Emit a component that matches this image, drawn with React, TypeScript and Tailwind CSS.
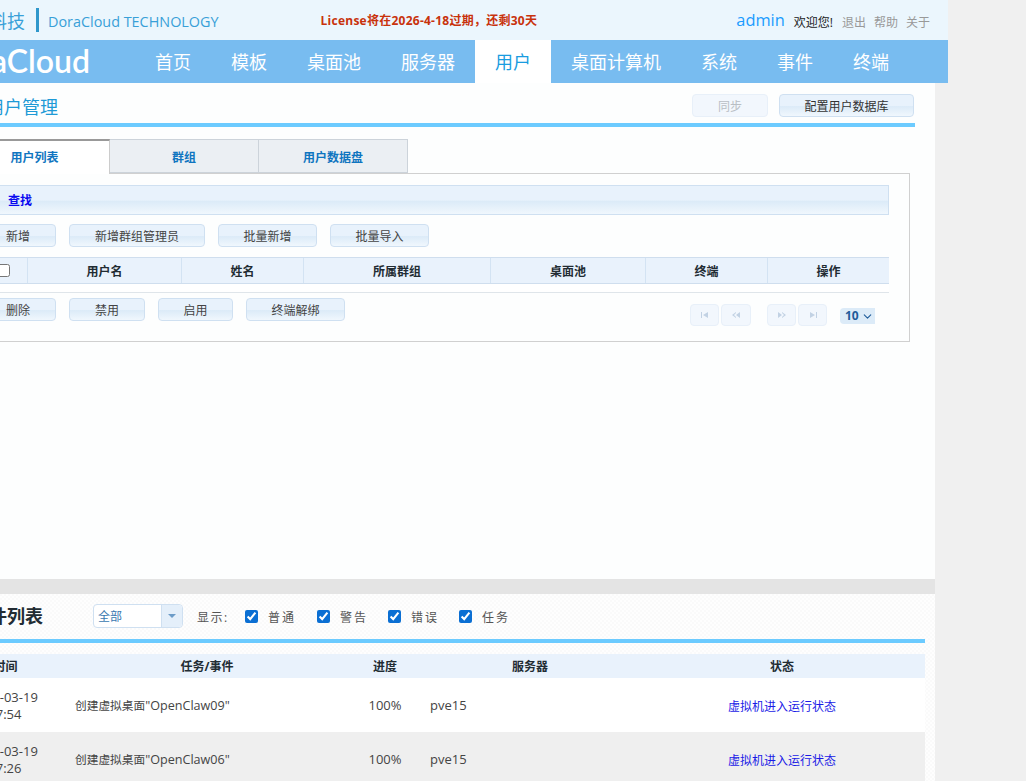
import { ChevronDown } from "lucide-react";

const font = "font-['Open_Sans','Noto_Sans_CJK_SC',sans-serif]";
const glossy =
  "bg-[linear-gradient(#e8f2fc_0%,#e8f2fc_50%,#dcebf8_55%,#f0f7fd_100%)] border border-[#cfe0f1]";

const navItems = ["首页", "模板", "桌面池", "服务器", "用户", "桌面计算机", "系统", "事件", "终端"];
const topButtons = [
  { label: "新增", w: "w-[76px]" },
  { label: "新增群组管理员", w: "w-[136px]" },
  { label: "批量新增", w: "w-[99px]" },
  { label: "批量导入", w: "w-[99px]" },
];
const bottomButtons = [
  { label: "删除", w: "w-[76px]" },
  { label: "禁用", w: "w-[76px]" },
  { label: "启用", w: "w-[75px]" },
  { label: "终端解绑", w: "w-[99px]" },
];
const columns = ["用户名", "姓名", "所属群组", "桌面池", "终端", "操作"];
const filters = [
  { label: "普通", w: "w-[72px]" },
  { label: "警告", w: "w-[71px]" },
  { label: "错误", w: "w-[71px]" },
  { label: "任务", w: "w-[60px]" },
];
const events = [
  { date: "2026-03-19", time: "17:47:54", task: "OpenClaw09", bg: "bg-white" },
  { date: "2026-03-19", time: "17:47:26", task: "OpenClaw06", bg: "bg-[#efefef]" },
];
const eventGrid = "grid grid-cols-[115px_284px_78px_206px_292px]";

function PagerIcon({ d }: { d: string }) {
  return (
    <svg width="10" height="8" viewBox="0 0 10 8" className="fill-[#c2d2e4]">
      <path d={d} />
    </svg>
  );
}

const pager = [
  { d: "M1 1h1v6H1zM8 1v6L3 4z", w: "w-[29px]" },
  { d: "M9 1v6L5 4zM5 1v1L3 4l2 2v1L1 4z", w: "w-[30px]" },
  { d: "M1 1v6l4-3zM5 1v1l2 2-2 2v1l4-3z", w: "w-[29px]" },
  { d: "M2 1v6l5-3zM8 1h1v6H8z", w: "w-[29px]" },
];

export default function App() {
  return (
    <div className={`w-[1026px] h-[781px] overflow-hidden bg-[#f0f0f0] ${font}`}>
      <div className="w-[1076px] -ml-[50px]">
        {/* Header */}
        <div className="w-[998px] h-10 bg-[#ebf6fd] flex items-center pl-[39px] pr-[18px]">
          <span className="text-[18px] text-[#38a0d8] mt-[2px]">科技</span>
          <span className="w-[3px] h-6 bg-[#2f97cb] ml-[11px]" />
          <span className="ml-[9px] mt-[3px] text-[14.4px] text-[#38a0d8]">DoraCloud TECHNOLOGY</span>
          <span className="ml-[102px] mt-[2px] text-xs tracking-[0.25px] font-bold text-[#c8320c]">
            License将在2026-4-18过期，还剩30天
          </span>
          <span className="ml-auto mt-px text-[16.4px] text-[#1a9cff]">admin</span>
          <span className="ml-[9px] mt-[5px] text-xs text-[#222]">欢迎您!</span>
          <span className="ml-[9px] mt-[5px] text-xs text-[#999]">退出</span>
          <span className="ml-2 mt-[5px] text-xs text-[#999]">帮助</span>
          <span className="ml-2 mt-[5px] text-xs text-[#999]">关于</span>
        </div>

        {/* Nav */}
        <div className="w-[998px] h-[43px] bg-[#78bcf0] flex">
          <div className="w-[185px] pr-[45px] flex items-center justify-end">
            <span className="text-[32px] font-['Lato',sans-serif] font-semibold text-white leading-none -mt-[2px]">
              DoraCloud
            </span>
          </div>
          {navItems.map((item) => (
            <div
              key={item}
              className={
                item === "用户"
                  ? "px-5 pt-[2px] flex items-center text-[18px] bg-white text-[#1a9ce0]"
                  : "px-5 pt-[2px] flex items-center text-[18px] text-white"
              }
            >
              {item}
            </div>
          ))}
        </div>

        {/* Main */}
        <div className="w-[985px] h-[496px] bg-[#fdfefe]">
          <div className="w-[965px] h-10 flex pl-9 pr-px">
            <span className="text-[18px] text-[#1e9ad6] mt-[11px] leading-[26px]">用户管理</span>
            <button className="ml-auto mt-[11px] pt-[2px] w-[76px] h-[23px] rounded border border-[#e8f0f9] bg-[#f2f7fd] text-xs text-[#b9bec4]">
              同步
            </button>
            <button className={`ml-[11px] mt-[11px] pt-[2px] w-[135px] h-[23px] rounded text-xs text-[#333] ${glossy}`}>
              配置用户数据库
            </button>
          </div>
          <div className="w-[965px] h-1 bg-[#6ccbff]" />

          {/* Tabs */}
          <div className="flex mt-3 ml-[10px] h-[35px] -mb-px relative">
            <div className="w-[150px] pt-px border-t-2 border-r border-[#999] border-r-[#ccc] bg-white text-xs font-bold text-[#0f75c0] flex items-center justify-center">
              用户列表
            </div>
            <div className="w-[149px] h-[34px] pt-[3px] border border-l-0 border-[#ccd3da] bg-[#ebeff3] text-xs font-bold text-[#0f75c0] flex items-center justify-center">
              群组
            </div>
            <div className="w-[149px] h-[34px] pt-[3px] border border-l-0 border-[#ccd3da] bg-[#ebeff3] text-xs font-bold text-[#0f75c0] flex items-center justify-center">
              用户数据盘
            </div>
          </div>

          {/* Panel */}
          <div className="ml-[10px] w-[950px] h-[169px] border border-[#d0d0d0] pl-[19px] pr-5 pt-[11px]">
            <div className={`h-[30px] pl-[27px] pt-[2px] flex items-center text-xs font-bold text-[#0a0af0] ${glossy}`}>
              查找
            </div>
            <div className="flex gap-[13px] mt-[9px]">
              {topButtons.map((b) => (
                <button key={b.label} className={`${b.w} h-[23px] pt-[2px] rounded text-xs text-[#444] ${glossy}`}>
                  {b.label}
                </button>
              ))}
            </div>
            <div className="mt-[10px] border-b border-[#dfe5ea] bg-white h-9">
              <div className="grid grid-cols-[47px_154px_122px_187px_155px_122px_122px] h-[27px] bg-[#e9f2fc] border-y border-[#cfdeee]">
                <div className="flex items-center justify-center">
                  <input type="checkbox" className="w-[13px] h-[13px]" />
                </div>
                {columns.map((c) => (
                  <div
                    key={c}
                    className="border-l border-[#d3e3f3] pt-[2px] flex items-center justify-center text-xs font-bold text-[#222c33]"
                  >
                    {c}
                  </div>
                ))}
              </div>
            </div>
            <div className="flex">
              <div className="flex gap-[13px] mt-[5px]">
                {bottomButtons.map((b) => (
                  <button key={b.label} className={`${b.w} h-[23px] pt-[2px] rounded text-xs text-[#444] ${glossy}`}>
                    {b.label}
                  </button>
                ))}
              </div>
              <div className="ml-auto flex mt-[11px] pr-[14px]">
                {pager.map((p, i) => (
                  <div
                    key={p.d}
                    className={`${p.w} h-[22px] rounded border border-[#e8f0f9] bg-[#f2f7fd] flex items-center justify-center ${
                      i === 1 ? "ml-[2px]" : i === 2 ? "ml-4" : i === 3 ? "ml-[2px]" : ""
                    }`}
                  >
                    <PagerIcon d={p.d} />
                  </div>
                ))}
                <div className="ml-[13px] mt-[4px] w-[35px] h-4 rounded-l bg-[#dcebf8] flex items-center pl-[5px] text-xs font-bold text-[#1f5c9a]">
                  10
                  <ChevronDown size={13} className="ml-[2px] text-[#1f5c9a]" />
                </div>
              </div>
            </div>
          </div>
        </div>

        {/* Splitter */}
        <div className="w-[985px] h-[15px] bg-[#e4e4e4]" />

        {/* Event list */}
        <div className="w-[985px] h-[187px] overflow-hidden bg-[repeating-conic-gradient(#fafafa_0_25%,#fefefe_0_50%)] bg-[length:4px_4px]">
          <div className="h-[45px] flex items-center">
            <span className="w-[93px] text-right text-[18px] font-bold text-[#222c33]">事件列表</span>
            <div className="ml-[50px] -mt-px w-[90px] h-6 rounded border border-[#cfe0f1] bg-white flex">
              <span className="flex-1 pl-1 pt-px text-xs text-[#3a78b0] leading-[22px]">全部</span>
              <div className="w-[21px] border-l border-[#cfe0f1] bg-[#e4effa] rounded-r flex items-center justify-center">
                <span className="w-0 h-0 border-x-[4px] border-x-transparent border-t-[4px] border-t-[#6c9cc8]" />
              </div>
            </div>
            <span className="ml-[14px] mt-[2px] w-[48px] text-xs tracking-[1.5px] text-[#555]">显示:</span>
            {filters.map((f) => (
              <label key={f.label} className={`${f.w} flex items-center text-xs tracking-[2px] text-[#555]`}>
                <input type="checkbox" defaultChecked readOnly className="w-[13px] h-[13px] m-0 mr-[10px] accent-[#0b6fd3]" />
                <span className="mt-[2px]">{f.label}</span>
              </label>
            ))}
          </div>
          <div className="w-[975px] h-1 bg-[#6ccbff]" />
          <div className={`w-[975px] mt-[11px] h-6 pt-[2px] bg-[#e9f2fc] ${eventGrid} items-center text-xs font-bold text-[#222c33] text-center`}>
            <div className="pr-1">时间</div>
            <div>任务/事件</div>
            <div className="pr-[6px]">进度</div>
            <div>服务器</div>
            <div className="pl-[6px]">状态</div>
          </div>
          {events.map((e) => (
            <div key={e.task} className={`w-[975px] h-[54px] ${e.bg} ${eventGrid} items-center text-xs text-[#444]`}>
              <div className="pl-5 pt-[2px] text-[13px] leading-[17px]">
                {e.date}
                <br />
                {e.time}
              </div>
              <div className="pl-[10px] pt-[2px] text-[11.7px]">
                创建虚拟桌面<span className="text-[12.6px]">"{e.task}"</span>
              </div>
              <div className="text-center pr-[6px] pt-[2px] text-[13px]">100%</div>
              <div className="pl-[3px] pt-[2px] text-[13px]">pve15</div>
              <div className="pl-[6px] pt-[4px] text-center text-[#1a1ae6]">虚拟机进入运行状态</div>
            </div>
          ))}
        </div>
      </div>
    </div>
  );
}
